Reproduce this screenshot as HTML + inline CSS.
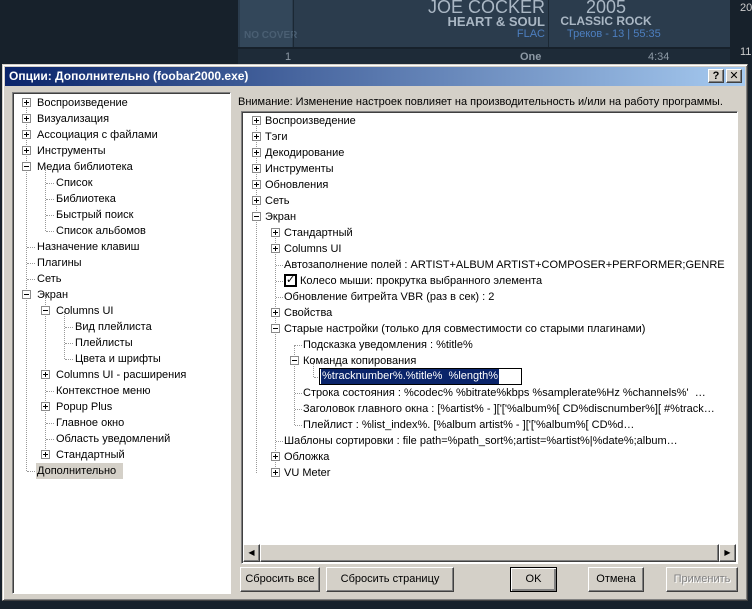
<!DOCTYPE html>
<html><head><meta charset="utf-8"><style>
*{margin:0;padding:0;box-sizing:border-box}
body{width:752px;height:609px;overflow:hidden;background:#17212b;font-family:"Liberation Sans","DejaVu Sans",sans-serif;font-size:11px;color:#000;position:relative}
.a{position:absolute;white-space:nowrap}
.t{position:absolute;white-space:nowrap;height:16px;line-height:17px}
.b{position:absolute;width:9px;height:9px;border:1px solid #8a8a8a;background:#fff}
.b::before{content:"";position:absolute;left:1px;top:3px;width:5px;height:1px;background:#000}
.p::after{content:"";position:absolute;left:3px;top:1px;width:1px;height:5px;background:#000}
.h{position:absolute;height:1px;border-top:1px dotted #999}
.v{position:absolute;width:1px;border-left:1px dotted #999}
.btn{position:absolute;height:25px;background:#d4d0c8;border:1px solid;border-color:#fff #404040 #404040 #fff;box-shadow:inset -1px -1px #808080;text-align:center;line-height:22px;font-size:11px}
</style></head><body>
<!-- background player -->
<div class="a" style="left:238px;top:0;width:492px;height:47px;background:#2b3c4d"></div>
<div class="a" style="left:240px;top:0;width:52px;height:47px;background:#33475a"></div>
<div class="a" style="left:244px;top:30px;color:#4a5f73;font-weight:bold;font-size:10px">NO COVER</div>
<div class="a" style="left:293px;top:0;width:1px;height:47px;background:#1b2834"></div>
<div class="a" style="left:548px;top:0;width:1px;height:47px;background:#1b2834"></div>
<div class="a" style="left:300px;top:-3px;width:245px;text-align:right;color:#aab7c4;font-size:18px">JOE COCKER</div>
<div class="a" style="left:300px;top:14px;width:245px;text-align:right;color:#aab7c4;font-size:13px;font-weight:bold">HEART &amp; SOUL</div>
<div class="a" style="left:300px;top:28px;width:245px;text-align:right;color:#4d7fc0;font-size:11px">FLAC</div>
<div class="a" style="left:552px;top:-3px;width:108px;text-align:center;color:#aab7c4;font-size:18px">2005</div>
<div class="a" style="left:552px;top:14px;width:108px;text-align:center;color:#aab7c4;font-size:12px;font-weight:bold">CLASSIC ROCK</div>
<div class="a" style="left:552px;top:28px;width:120px;color:#4d7fc0;font-size:11px;padding-left:15px">Треков - 13 | 55:35</div>
<div class="a" style="left:238px;top:49px;width:492px;height:16px;background:#1e2b38"></div>
<div class="a" style="left:285px;top:51px;color:#8d99a5;font-size:11px">1</div>
<div class="a" style="left:520px;top:51px;color:#8d99a5;font-size:11px;font-weight:bold">One</div>
<div class="a" style="left:648px;top:51px;color:#8d99a5;font-size:11px">4:34</div>
<div class="a" style="left:740px;top:2px;color:#ccc;font-size:11px">20</div>
<div class="a" style="left:740px;top:46px;color:#ccc;font-size:11px">11</div>
<!-- dialog -->
<div class="a" style="left:2px;top:64px;width:746px;height:537px;background:#d4d0c8;border:1px solid;border-color:#d4d0c8 #404040 #404040 #d4d0c8;box-shadow:inset 1px 1px #fff,inset -1px -1px #808080"></div>
<div class="a" style="left:5px;top:67px;width:740px;height:19px;background:linear-gradient(to right,#0a246a,#a6caf0)"></div>
<div class="a" style="left:9px;top:68px;color:#fff;font-weight:bold;font-size:12px;line-height:17px">Опции: Дополнительно (foobar2000.exe)</div>
<div class="btn" style="left:708px;top:69px;width:16px;height:14px;line-height:12px;font-weight:bold;font-size:11px">?</div>
<div class="btn" style="left:726px;top:69px;width:16px;height:14px;line-height:12px;font-weight:bold;font-size:11px">✕</div>
<!-- left tree -->
<div class="a" style="left:12px;top:92px;width:219px;height:502px;background:#fff;border:1px solid;border-color:#808080 #fff #fff #808080;box-shadow:inset 1px 1px #404040"></div>
<div class="v" style="left:26px;top:103px;height:368px"></div>
<div class="v" style="left:45px;top:167px;height:64px"></div>
<div class="v" style="left:45px;top:295px;height:160px"></div>
<div class="v" style="left:64px;top:311px;height:48px"></div>
<div class="t" style="left:37px;top:95px">Воспроизведение</div><div class="b p" style="left:22px;top:98px"></div>
<div class="t" style="left:37px;top:111px">Визуализация</div><div class="b p" style="left:22px;top:114px"></div>
<div class="t" style="left:37px;top:127px">Ассоциация с файлами</div><div class="b p" style="left:22px;top:130px"></div>
<div class="t" style="left:37px;top:143px">Инструменты</div><div class="b p" style="left:22px;top:146px"></div>
<div class="t" style="left:37px;top:159px">Медиа библиотека</div><div class="b" style="left:22px;top:162px"></div>
<div class="h" style="left:46px;top:183px;width:8px"></div><div class="t" style="left:56px;top:175px">Список</div>
<div class="h" style="left:46px;top:199px;width:8px"></div><div class="t" style="left:56px;top:191px">Библиотека</div>
<div class="h" style="left:46px;top:215px;width:8px"></div><div class="t" style="left:56px;top:207px">Быстрый поиск</div>
<div class="h" style="left:46px;top:231px;width:8px"></div><div class="t" style="left:56px;top:223px">Список альбомов</div>
<div class="h" style="left:27px;top:247px;width:8px"></div><div class="t" style="left:37px;top:239px">Назначение клавиш</div>
<div class="h" style="left:27px;top:263px;width:8px"></div><div class="t" style="left:37px;top:255px">Плагины</div>
<div class="h" style="left:27px;top:279px;width:8px"></div><div class="t" style="left:37px;top:271px">Сеть</div>
<div class="t" style="left:37px;top:287px">Экран</div><div class="b" style="left:22px;top:290px"></div>
<div class="t" style="left:56px;top:303px">Columns UI</div><div class="b" style="left:41px;top:306px"></div>
<div class="h" style="left:65px;top:327px;width:8px"></div><div class="t" style="left:75px;top:319px">Вид плейлиста</div>
<div class="h" style="left:65px;top:343px;width:8px"></div><div class="t" style="left:75px;top:335px">Плейлисты</div>
<div class="h" style="left:65px;top:359px;width:8px"></div><div class="t" style="left:75px;top:351px">Цвета и шрифты</div>
<div class="t" style="left:56px;top:367px">Columns UI - расширения</div><div class="b p" style="left:41px;top:370px"></div>
<div class="h" style="left:46px;top:391px;width:8px"></div><div class="t" style="left:56px;top:383px">Контекстное меню</div>
<div class="t" style="left:56px;top:399px">Popup Plus</div><div class="b p" style="left:41px;top:402px"></div>
<div class="h" style="left:46px;top:423px;width:8px"></div><div class="t" style="left:56px;top:415px">Главное окно</div>
<div class="h" style="left:46px;top:439px;width:8px"></div><div class="t" style="left:56px;top:431px">Область уведомлений</div>
<div class="t" style="left:56px;top:447px">Стандартный</div><div class="b p" style="left:41px;top:450px"></div>
<div class="h" style="left:27px;top:471px;width:8px"></div>
<div class="t" style="left:36px;top:463px;background:#d4d0c8;padding:0 1px;width:87px">Дополнительно</div>
<!-- right -->
<div class="a" style="left:238px;top:94px;font-size:11px;line-height:16px">Внимание: Изменение настроек повлияет на производительность и/или на работу программы.</div>
<div class="a" style="left:241px;top:111px;width:497px;height:453px;background:#fff;border:1px solid;border-color:#808080 #fff #fff #808080;box-shadow:inset 1px 1px #404040"></div>
<div class="v" style="left:256px;top:121px;height:352px"></div>
<div class="v" style="left:275px;top:233px;height:240px"></div>
<div class="v" style="left:294px;top:345px;height:80px"></div>
<div class="v" style="left:313px;top:361px;height:16px"></div>
<div class="t" style="left:265px;top:113px">Воспроизведение</div><div class="b p" style="left:252px;top:116px"></div>
<div class="t" style="left:265px;top:129px">Тэги</div><div class="b p" style="left:252px;top:132px"></div>
<div class="t" style="left:265px;top:145px">Декодирование</div><div class="b p" style="left:252px;top:148px"></div>
<div class="t" style="left:265px;top:161px">Инструменты</div><div class="b p" style="left:252px;top:164px"></div>
<div class="t" style="left:265px;top:177px">Обновления</div><div class="b p" style="left:252px;top:180px"></div>
<div class="t" style="left:265px;top:193px">Сеть</div><div class="b p" style="left:252px;top:196px"></div>
<div class="t" style="left:265px;top:209px">Экран</div><div class="b" style="left:252px;top:212px"></div>
<div class="t" style="left:284px;top:225px">Стандартный</div><div class="b p" style="left:271px;top:228px"></div>
<div class="t" style="left:284px;top:241px">Columns UI</div><div class="b p" style="left:271px;top:244px"></div>
<div class="h" style="left:276px;top:265px;width:7px"></div><div class="t" style="left:284px;top:257px">Автозаполнение полей : ARTIST+ALBUM ARTIST+COMPOSER+PERFORMER;GENRE</div>
<div class="h" style="left:276px;top:281px;width:7px"></div>
<div class="a" style="left:284px;top:274px;width:13px;height:13px;border:2px solid #000;background:#fff;font-size:11px;line-height:9px;text-align:center;font-weight:bold">✓</div>
<div class="t" style="left:300px;top:273px">Колесо мыши: прокрутка выбранного элемента</div>
<div class="h" style="left:276px;top:297px;width:7px"></div><div class="t" style="left:284px;top:289px">Обновление битрейта VBR (раз в сек) : 2</div>
<div class="t" style="left:284px;top:305px">Свойства</div><div class="b p" style="left:271px;top:308px"></div>
<div class="t" style="left:284px;top:321px">Старые настройки (только для совместимости со старыми плагинами)</div><div class="b" style="left:271px;top:324px"></div>
<div class="h" style="left:295px;top:345px;width:7px"></div><div class="t" style="left:303px;top:337px">Подсказка уведомления : %title%</div>
<div class="t" style="left:303px;top:353px">Команда копирования</div><div class="b" style="left:290px;top:356px"></div>
<div class="h" style="left:314px;top:377px;width:6px"></div>
<div class="a" style="left:319px;top:368px;width:203px;height:17px;border:1px solid #000;background:#fff"></div>
<div class="t" style="left:321px;top:369px;height:15px;line-height:15px;background:#0a246a;color:#fff;padding:0 1px">%tracknumber%.%title%&nbsp; %length%</div>
<div class="h" style="left:295px;top:393px;width:7px"></div><div class="t" style="left:303px;top:385px">Строка состояния : %codec% %bitrate%kbps %samplerate%Hz %channels%' &nbsp;…</div>
<div class="h" style="left:295px;top:409px;width:7px"></div><div class="t" style="left:303px;top:401px">Заголовок главного окна : [%artist% - ]['['%album%[ CD%discnumber%][ #%track…</div>
<div class="h" style="left:295px;top:425px;width:7px"></div><div class="t" style="left:303px;top:417px">Плейлист : %list_index%. [%album artist% - ]['['%album%[ CD%d…</div>
<div class="h" style="left:276px;top:441px;width:7px"></div><div class="t" style="left:284px;top:433px">Шаблоны сортировки : file path=%path_sort%;artist=%artist%|%date%;album…</div>
<div class="t" style="left:284px;top:449px">Обложка</div><div class="b p" style="left:271px;top:452px"></div>
<div class="t" style="left:284px;top:465px">VU Meter</div><div class="b p" style="left:271px;top:468px"></div>
<!-- scrollbar -->
<div class="a" style="left:243px;top:544px;width:493px;height:18px;background:#ece9e3"></div>
<div class="btn" style="left:243px;top:544px;width:17px;height:18px;line-height:15px;font-size:8px">◀</div>
<div class="btn" style="left:719px;top:544px;width:17px;height:18px;line-height:15px;font-size:8px">▶</div>
<div class="btn" style="left:260px;top:544px;width:459px;height:18px"></div>
<!-- buttons -->
<div class="btn" style="left:240px;top:567px;width:80px">Сбросить все</div>
<div class="btn" style="left:326px;top:567px;width:128px">Сбросить страницу</div>
<div class="btn" style="left:510px;top:567px;width:47px;border:1px solid #000;box-shadow:inset 1px 1px #fff,inset -2px -2px #808080">OK</div>
<div class="btn" style="left:588px;top:567px;width:56px">Отмена</div>
<div class="btn" style="left:666px;top:567px;width:72px;color:#808080;text-shadow:1px 1px #fff">Применить</div>
</body></html>
